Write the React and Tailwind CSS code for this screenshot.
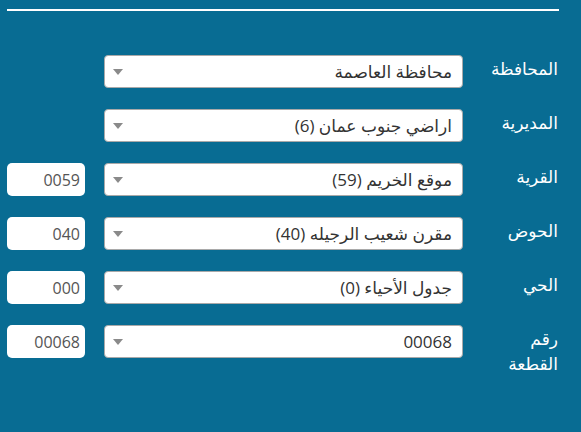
const rows = [
  { label: 'المحافظة', value: 'محافظة العاصمة' },
  { label: 'المديرية', value: 'اراضي جنوب عمان (6)' },
  { label: 'القرية', value: 'موقع الخريم (59)', code: '0059' },
  { label: 'الحوض', value: 'مقرن شعيب الرجيله (40)', code: '040' },
  { label: 'الحي', value: 'جدول الأحياء (0)', code: '000' },
  { label: 'رقم القطعة', value: '00068', code: '00068', wrap: true },
];

function Caret() {
  return (
    <svg width="10" height="6" viewBox="0 0 10 6" className="shrink-0">
      <path d="M0 0h10L5 6z" fill="#8a8a8a" />
    </svg>
  );
}

export default function App() {
  return (
    <div
      dir="rtl"
      className="h-[432px] w-[581px] overflow-hidden bg-[#086c93]"
      style={{ fontFamily: '"Open Sans", "Noto Sans", "DejaVu Sans", sans-serif' }}
    >
      <div className="mr-[22px] ml-[7px] pt-[9px]">
        <div className="h-[2px] bg-white" />
      </div>
      <div className="flex flex-col gap-[21px] pt-[44px] pr-[23px] pl-[7px]">
        {rows.map((row) => (
          <div key={row.label} className="flex items-start">
            <div
              className={`w-[95px] shrink-0 pt-[1px] text-[17px] leading-[25px] text-white ${row.wrap ? 'pl-[30px]' : ''}`}
            >
              {row.label}
            </div>
            <div className="flex h-[33px] w-[359px] shrink-0 items-center justify-between rounded-[4px] border border-[#a9a9a9] bg-white pr-[10px] pl-[8px]">
              <span className="text-[17px] text-[#333]">{row.value}</span>
              <Caret />
            </div>
            {row.code && (
              <div className="mr-[19px] flex h-[33px] w-[78px] shrink-0 items-center rounded-[5px] bg-white px-[5px] text-[16px] text-[#555]">
                {row.code}
              </div>
            )}
          </div>
        ))}
      </div>
    </div>
  );
}
